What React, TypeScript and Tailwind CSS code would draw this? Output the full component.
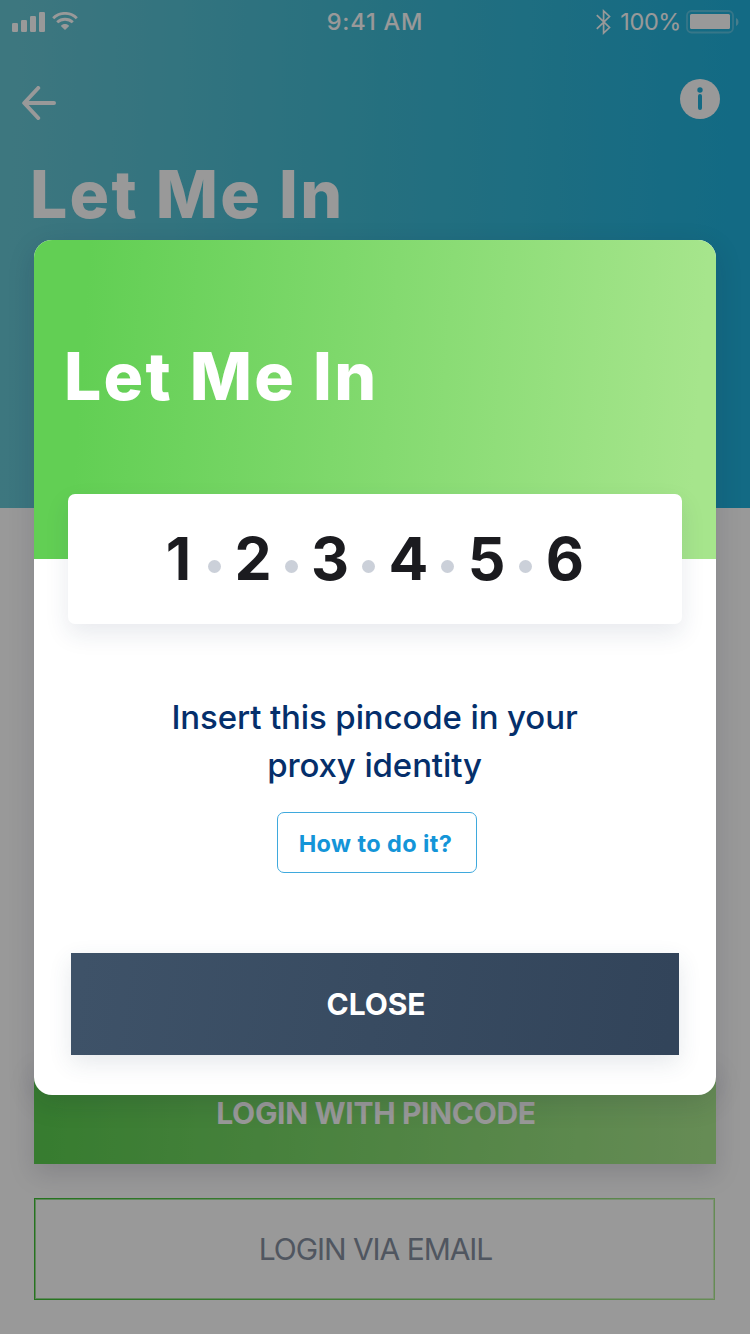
const digits = [
  { value: '1', cell: 'w-[60px]', glyph: 'pl-px' },
  { value: '2', cell: 'w-[64px]', glyph: '' },
  { value: '3', cell: 'w-[64px]', glyph: '' },
  { value: '4', cell: 'w-[66px]', glyph: 'pl-px' },
  { value: '5', cell: 'w-[65px]', glyph: '' },
  { value: '6', cell: 'w-[66px]', glyph: '' },
];

function SignalIcon() {
  return (
    <svg className="block h-5 w-[33px]" viewBox="0 0 33 20" fill="#fff">
      <rect x="0" y="11" width="6" height="9" rx="1.3" />
      <rect x="9" y="8" width="6" height="12" rx="1.3" />
      <rect x="18" y="4" width="6" height="16" rx="1.3" />
      <rect x="27" y="0" width="6" height="20" rx="1.3" />
    </svg>
  );
}

function WifiIcon() {
  return (
    <svg className="mb-[2px] block h-[18px] w-[26px]" viewBox="0 0 26 18" fill="none" stroke="#fff" strokeWidth="2.9">
      <path d="M1.200 6.200C7.800 -.2 18.200 -.2 24.800 6.200" />
      <path d="M5.200 10.300C9.500 6.300 16.500 6.300 20.800 10.300" />
      <path d="M8.800 13.900C11.100 11.400 14.900 11.400 17.200 13.900L13 18Z" fill="#fff" stroke="none" />
    </svg>
  );
}

function BluetoothIcon() {
  return (
    <svg className="block h-[26px] w-[15px]" viewBox="0 0 15 26" fill="none" stroke="#fff" strokeWidth="1.7">
      <path d="M.8 6.2 13.500 18.500 7.600 24V2L13.500 7.500.8 19.800" />
    </svg>
  );
}

function BatteryIcon() {
  return (
    <svg className="block h-6 w-[53px]" viewBox="0 0 53 24">
      <rect x="1" y="1" width="46" height="21.500" rx="4.500" fill="none" stroke="#fff" strokeOpacity=".26" strokeWidth="1.800" />
      <rect x="4" y="4" width="40" height="15" rx="1.500" fill="#fff" />
      <path d="M50 8c3.300 1.200 3.300 6.800 0 8z" fill="#fff" fillOpacity=".4" />
    </svg>
  );
}

function BackIcon() {
  return (
    <svg className="block h-[34px] w-[34px]" viewBox="0 0 34 34" fill="none" stroke="#fff" strokeWidth="4" strokeLinecap="round" strokeLinejoin="round">
      <path d="M16.200 2 2.200 17l14 15M3 17h29" />
    </svg>
  );
}

function InfoIcon() {
  return (
    <svg className="block h-10 w-10" viewBox="0 0 40 40">
      <circle cx="20" cy="20" r="20" fill="#fff" />
      <circle cx="20" cy="11" r="2.700" fill="#20b1dc" />
      <rect x="18" y="15" width="4" height="16" rx="2" fill="#20b1dc" />
    </svg>
  );
}

function LoginScreen() {
  return (
    <div className="flex h-full flex-col bg-white">
      <header className="h-[508px] bg-[linear-gradient(92deg,#67c6d4_2%,#3fbbd4_50%,#20b1dc_96%)] text-white">
        <div className="grid h-[44px] grid-cols-3 items-center">
          <div className="flex items-center gap-[7px] pl-3">
            <SignalIcon />
            <WifiIcon />
          </div>
          <div className="text-center text-[23.500px] font-medium tracking-[0.800px]">9:41 AM</div>
          <div className="flex items-center justify-end pr-[11px]">
            <BluetoothIcon />
            <span className="mr-[5px] ml-[9px] text-[23.500px] leading-6 tracking-[-0.400px]">100%</span>
            <BatteryIcon />
          </div>
        </div>
        <div className="flex justify-between pt-[35px] pr-[30px] pl-[22px]">
          <div className="pt-[7px]">
            <BackIcon />
          </div>
          <InfoIcon />
        </div>
        <h1 className="pt-[34px] pl-[30px] text-[66px] leading-[80px] font-extrabold tracking-[2.300px]">Let Me In</h1>
      </header>
      <div className="mt-auto flex flex-col gap-[34px] px-[34px] pb-[34px]">
        <button className="h-[102px] bg-[linear-gradient(94deg,#5ccf50_2%,#aae98e_98%)] pl-[2px] text-[30px] font-bold tracking-[-0.320px] text-white shadow-[0_10px_24px_rgba(30,30,60,0.15)]">
          LOGIN WITH PINCODE
        </button>
        <button className="mr-px h-[102px] bg-[linear-gradient(94deg,#3fc034,#aae98e)] p-px">
          <span className="flex h-full items-center justify-center border border-white/50 bg-white bg-clip-padding pl-[2px] text-[30px] tracking-[-1.050px] text-[#858fa0]">LOGIN VIA EMAIL</span>
        </button>
      </div>
    </div>
  );
}

function PincodeDialog() {
  return (
    <section className="flex h-[855px] w-[682px] flex-col overflow-hidden rounded-[18px] bg-white shadow-[0_8px_28px_rgba(20,20,50,0.14)]">
      <div className="h-[319px] shrink-0 bg-[linear-gradient(94deg,#62cf54_8%,#a6e58c_96%)] pt-[96px] pl-[30px] text-white">
        <h2 className="text-[66px] leading-[80px] font-extrabold tracking-[2.300px]">Let Me In</h2>
      </div>
      <div className="mx-[34px] -mt-[65px] flex h-[130px] shrink-0 items-center rounded-[7px] bg-white pl-[80px] shadow-[0_10px_24px_rgba(30,50,90,0.10)]">
        {digits.map((digit, index) => (
          <div key={digit.value} className="flex items-center">
            {index > 0 && <span className="mt-[15px] h-[13px] w-[13px] rounded-full bg-[#cbd0d9]" />}
            <span className={`${digit.cell} ${digit.glyph} text-center text-[59px] leading-[70px] font-bold text-[#1b1b1f]`}>{digit.value}</span>
          </div>
        ))}
      </div>
      <p className="mt-[69px] pr-px text-center text-[33px] leading-[48px] font-medium tracking-[-0.120px] text-[#052f6b]">
        Insert this pincode in your
        <br />
        proxy identity
      </p>
      <button className="mt-[23px] ml-[243px] h-[61px] w-[200px] shrink-0 rounded-[7px] border border-[#3fa9dd] pt-[3px] pr-[3px] text-[23.500px] font-bold tracking-[0.400px] text-[#1495d8]">
        How to do it?
      </button>
      <button className="mx-[37px] mt-[80px] h-[102px] shrink-0 bg-[linear-gradient(98deg,#3e5268_2%,#32445a_98%)] pl-[2px] text-[30px] font-bold tracking-[-0.100px] text-white shadow-[0_8px_22px_rgba(50,70,100,0.12)]">
        CLOSE
      </button>
    </section>
  );
}

export default function App() {
  return (
    <main className="relative h-[1334px] w-[750px] overflow-hidden font-['Inter',sans-serif]">
      <LoginScreen />
      <div className="absolute inset-0 flex justify-center bg-black/40 pt-[240px]">
        <PincodeDialog />
      </div>
    </main>
  );
}
